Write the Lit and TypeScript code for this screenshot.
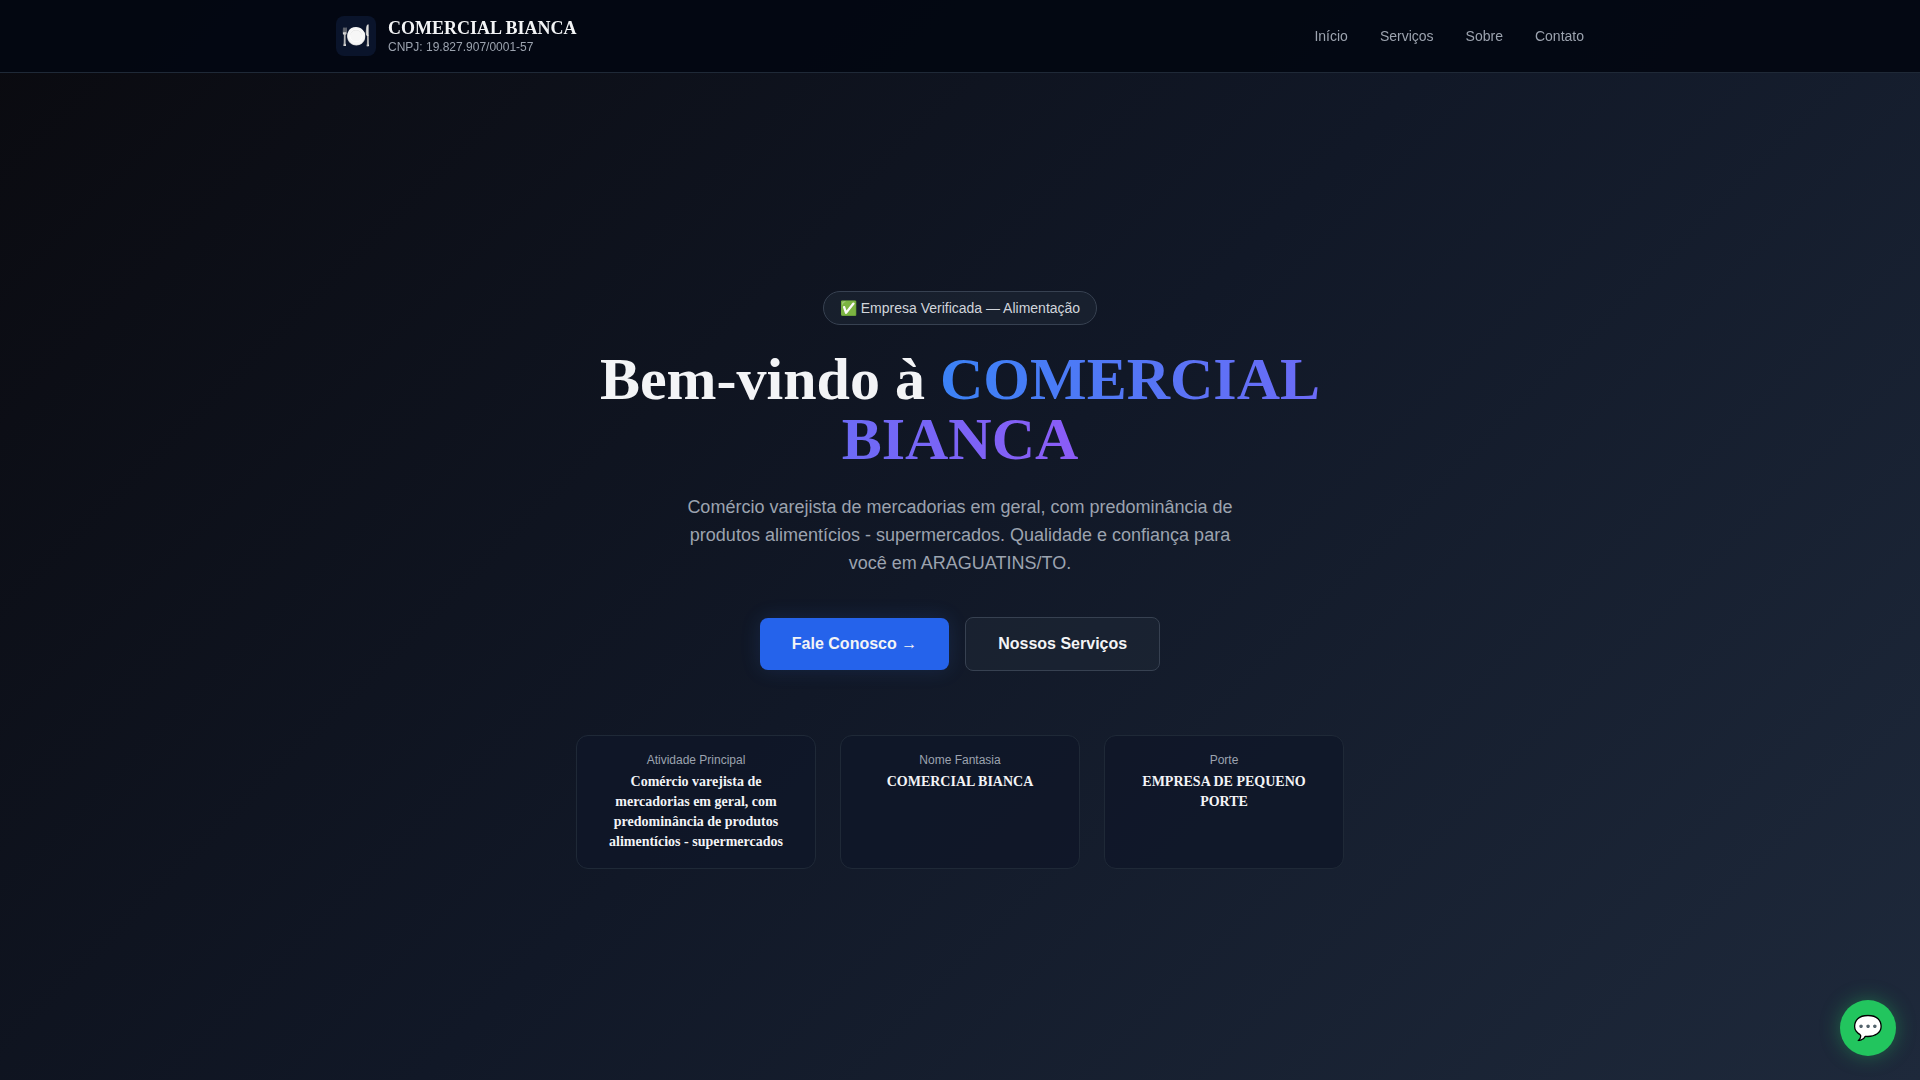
import { LitElement, html, css } from "lit";
import { customElement } from "lit/decorators.js";

interface NavItem {
  label: string;
  href: string;
}

interface Fact {
  label: string;
  value: string;
}

const NAV: NavItem[] = [
  { label: "Início", href: "#inicio" },
  { label: "Serviços", href: "#servicos" },
  { label: "Sobre", href: "#sobre" },
  { label: "Contato", href: "#contato" },
];

const FACTS: Fact[] = [
  {
    label: "Atividade Principal",
    value:
      "Comércio varejista de mercadorias em geral, com predominância de produtos alimentícios - supermercados",
  },
  { label: "Nome Fantasia", value: "COMERCIAL BIANCA" },
  { label: "Porte", value: "EMPRESA DE PEQUENO PORTE" },
];

@customElement("app-root")
export class AppRoot extends LitElement {
  static styles = css`
    :host {
      display: block;
      color: #f3f4f6;
      font-family: "Liberation Sans", Arial, sans-serif;
      font-size: 16px;
      line-height: 24px;
    }
    * {
      box-sizing: border-box;
    }
    a {
      color: inherit;
      text-decoration: none;
    }
    h1,
    p,
    dl,
    dt,
    dd {
      margin: 0;
    }
    .header {
      position: fixed;
      top: 0;
      left: 0;
      right: 0;
      z-index: 10;
      background: rgba(3, 7, 18, 0.95);
      border-bottom: 1px solid #1f2937;
    }
    .bar {
      display: flex;
      align-items: center;
      justify-content: space-between;
      max-width: 1280px;
      margin: 0 auto;
      padding: 16px;
    }
    .brand {
      display: flex;
      align-items: center;
      gap: 12px;
    }
    .logo {
      display: flex;
      align-items: center;
      justify-content: center;
      width: 40px;
      height: 40px;
      border-radius: 8px;
      background: #0a142b;
      font-size: 24px;
      line-height: 32px;
    }
    .brand-text {
      display: flex;
      flex-direction: column;
    }
    .name {
      font-family: "Liberation Serif", "Times New Roman", serif;
      font-size: 18px;
      line-height: 22px;
      font-weight: 700;
    }
    .cnpj {
      color: #9ca3af;
      font-size: 12px;
      line-height: 16px;
    }
    .nav {
      display: flex;
      gap: 32px;
      color: #9ca3af;
      font-size: 14px;
      line-height: 20px;
    }
    .hero {
      display: flex;
      flex-direction: column;
      align-items: center;
      justify-content: center;
      min-height: 100vh;
      padding: 80px 16px 0;
      background: linear-gradient(135deg, #0a0a0f 0%, #111827 50%, #1e293b 100%);
      text-align: center;
    }
    .badge {
      padding: 6px 16px;
      border: 1px solid #374151;
      border-radius: 9999px;
      background: rgba(31, 41, 55, 0.5);
      color: #d1d5db;
      font-size: 14px;
      line-height: 20px;
    }
    .title {
      max-width: 768px;
      margin-top: 24px;
      font-family: "Liberation Serif", "Times New Roman", serif;
      font-size: 60px;
      line-height: 60px;
      font-weight: 700;
    }
    .accent {
      background: linear-gradient(90deg, #3b82f6, #8b5cf6);
      -webkit-background-clip: text;
      background-clip: text;
      color: transparent;
    }
    .lead {
      max-width: 576px;
      margin-top: 24px;
      color: #9ca3af;
      font-size: 18px;
      line-height: 28px;
    }
    .actions {
      display: flex;
      flex-wrap: wrap;
      align-items: center;
      justify-content: center;
      gap: 16px;
      margin-top: 40px;
    }
    .button {
      padding: 14px 32px;
      border-radius: 8px;
      font-weight: 700;
    }
    .primary {
      background: #2563eb;
      box-shadow: 0 0 20px rgba(59, 130, 246, 0.15);
    }
    .secondary {
      border: 1px solid #374151;
      background: rgba(31, 41, 55, 0.5);
    }
    .facts {
      display: grid;
      grid-template-columns: repeat(3, 1fr);
      gap: 24px;
      width: 100%;
      max-width: 768px;
      margin-top: 64px;
    }
    .fact {
      padding: 16px;
      border: 1px solid #1f2937;
      border-radius: 12px;
      background: rgba(15, 22, 40, 0.8);
    }
    .fact-label {
      color: #9ca3af;
      font-size: 12px;
      line-height: 16px;
    }
    .fact-value {
      margin-top: 4px;
      font-family: "Liberation Serif", "Times New Roman", serif;
      font-size: 14px;
      line-height: 20px;
      font-weight: 700;
    }
    .chat {
      position: fixed;
      right: 24px;
      bottom: 24px;
      display: flex;
      align-items: center;
      justify-content: center;
      width: 56px;
      height: 56px;
      border-radius: 50%;
      background: #22c55e;
      box-shadow: 0 0 20px rgba(34, 197, 94, 0.4);
      font-size: 24px;
      line-height: 32px;
    }
  `;

  render() {
    return html`
      <header class="header">
        <div class="bar">
          <a class="brand" href="#inicio">
            <span class="logo" aria-hidden="true">🍽️</span>
            <span class="brand-text">
              <span class="name">COMERCIAL BIANCA</span>
              <span class="cnpj">CNPJ: 19.827.907/0001-57</span>
            </span>
          </a>
          <nav class="nav">
            ${NAV.map((item) => html`<a href=${item.href}>${item.label}</a>`)}
          </nav>
        </div>
      </header>
      <main class="hero" id="inicio">
        <p class="badge">✅ Empresa Verificada — Alimentação</p>
        <h1 class="title">
          Bem-vindo à <span class="accent">COMERCIAL BIANCA</span>
        </h1>
        <p class="lead">
          Comércio varejista de mercadorias em geral, com predominância de
          produtos alimentícios - supermercados. Qualidade e confiança para você
          em ARAGUATINS/TO.
        </p>
        <div class="actions">
          <a class="button primary" href="#contato">Fale Conosco →</a>
          <a class="button secondary" href="#servicos">Nossos Serviços</a>
        </div>
        <dl class="facts">
          ${FACTS.map(
            (fact) => html`
              <div class="fact">
                <dt class="fact-label">${fact.label}</dt>
                <dd class="fact-value">${fact.value}</dd>
              </div>
            `,
          )}
        </dl>
      </main>
      <a class="chat" href="#contato">💬</a>
    `;
  }
}
